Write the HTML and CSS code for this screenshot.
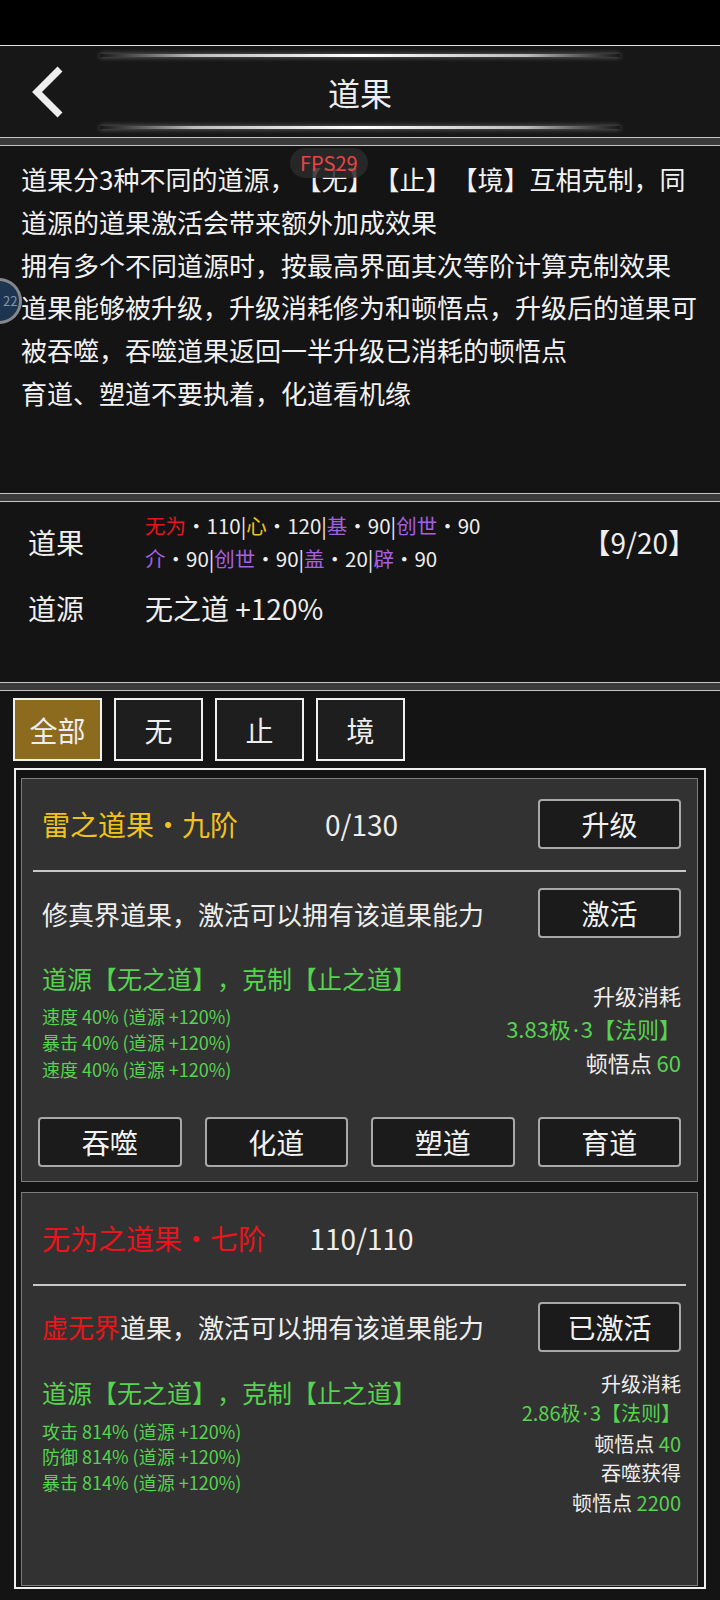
FILE: index.html
```html
<!DOCTYPE html>
<html lang="zh-CN">
<head>
  <meta charset="UTF-8">
  <meta name="viewport" content="width=device-width, initial-scale=1">
  <title>道果</title>
  <link rel="stylesheet" href="styles.css">
</head>
<body>
  <div class="status"></div>

  <header class="topbar">
    <div class="glow"></div>
    <div class="bar">
      <div class="back">
        <svg width="36" height="52" viewBox="0 0 36 52" fill="none" stroke="#eeeeee" stroke-width="7">
          <polyline points="31,3 8,26 31,49"/>
        </svg>
      </div>
      <h1 class="title">道果</h1>
      <div></div>
    </div>
    <div class="glow"></div>
  </header>

  <div class="stripe"></div>

  <section class="desc">
    道果分3种不同的道源，【无】【止】【境】互相克制，同<br>
    道源的道果激活会带来额外加成效果<br>
    拥有多个不同道源时，按最高界面其次等阶计算克制效果<br>
    道果能够被升级，升级消耗修为和顿悟点，升级后的道果可<br>
    被吞噬，吞噬道果返回一半升级已消耗的顿悟点<br>
    育道、塑道不要执着，化道看机缘
  </section>

  <div class="stripe"></div>

  <section class="stats">
    <div class="label">道果</div>
    <div class="tags">
      <span class="red">无为</span>·110|<span class="gold">心</span>·120|<span class="violet">基</span>·90|<span class="violet">创世</span>·90<br>
      <span class="violet">介</span>·90|<span class="violet">创世</span>·90|<span class="violet">盖</span>·20|<span class="violet">辟</span>·90
    </div>
    <div class="total">【9/20】</div>
    <div class="label">道源</div>
    <div class="source">无之道 +120%</div>
  </section>

  <div class="stripe"></div>

  <nav class="tabs">
    <div class="tab active">全部</div>
    <div class="tab">无</div>
    <div class="tab">止</div>
    <div class="tab">境</div>
  </nav>

  <main class="list">
    <div class="card">
      <div class="card-head">
        <span class="name gold">雷之道果·九阶</span>
        <span class="progress">0/130</span>
        <button class="btn">升级</button>
      </div>
      <div class="sep"></div>
      <div class="card-row">
        <span>修真界道果，激活可以拥有该道果能力</span>
        <button class="btn">激活</button>
      </div>
      <div class="card-body">
        <div class="effect">
          <div class="lead">道源【无之道】，克制【止之道】</div>
          <ul>
            <li>速度 40% (道源 +120%)</li>
            <li>暴击 40% (道源 +120%)</li>
            <li>速度 40% (道源 +120%)</li>
          </ul>
        </div>
        <div class="cost">
          <div>升级消耗</div>
          <div class="green">3.83极<span class="dot">·</span>3【法则】</div>
          <div>顿悟点 <span class="green">60</span></div>
        </div>
      </div>
      <div class="actions">
        <button class="btn">吞噬</button>
        <button class="btn">化道</button>
        <button class="btn">塑道</button>
        <button class="btn">育道</button>
      </div>
    </div>

    <div class="card final">
      <div class="card-head">
        <span class="name red">无为之道果·七阶</span>
        <span class="progress">110/110</span>
        <span></span>
      </div>
      <div class="sep"></div>
      <div class="card-row">
        <span><span class="red">虚无界</span>道果，激活可以拥有该道果能力</span>
        <button class="btn">已激活</button>
      </div>
      <div class="card-body">
        <div class="effect">
          <div class="lead">道源【无之道】，克制【止之道】</div>
          <ul>
            <li>攻击 814% (道源 +120%)</li>
            <li>防御 814% (道源 +120%)</li>
            <li>暴击 814% (道源 +120%)</li>
          </ul>
        </div>
        <div class="cost">
          <div>升级消耗</div>
          <div class="green">2.86极<span class="dot">·</span>3【法则】</div>
          <div>顿悟点 <span class="green">40</span></div>
          <div>吞噬获得</div>
          <div>顿悟点 <span class="green">2200</span></div>
        </div>
      </div>
    </div>
  </main>

  <!-- debug overlays from the device -->
  <div class="fps">FPS29</div>
  <div class="bubble">22</div>
</body>
</html>
```

FILE: styles.css
```css
* {
  margin: 0;
  padding: 0;
  box-sizing: border-box;
}
body {
  position: relative;
  width: 720px;
  min-height: 1600px;
  overflow-x: hidden;
  background: #141414;
  color: #eeeeee;
  font-family: "Noto Sans CJK SC", "Noto Sans", sans-serif;
  text-spacing-trim: space-all;
}
.red { color: #e8151b; }
.gold { color: #f0c21e; }
.violet { color: #a65fe3; }
.green { color: #56d34f; }
.dot {
  font-family: "Noto Sans", sans-serif;
  margin: 0 2px;
}

.status {
  height: 45px;
  background: #000;
}

/* header */
.topbar {
  background: #171717;
  border-top: 1px solid #dddddd;
  padding: 8px 0;
}
.glow {
  height: 3px;
  margin: 0 100px;
  background: linear-gradient(90deg, rgba(255,255,255,0), #bbbbbb 18%, #ffffff 50%, #bbbbbb 82%, rgba(255,255,255,0));
  box-shadow: 0 0 5px rgba(255, 255, 255, 0.45);
}
.bar {
  height: 69px;
  display: grid;
  grid-template-columns: 1fr auto 1fr;
  align-items: center;
}
.back {
  display: flex;
  padding-left: 29px;
}
.title {
  font-size: 32px;
  font-weight: 400;
}

.stripe {
  height: 9px;
  background: #3b3b3b;
  border-top: 1px solid #c4c4c4;
  border-bottom: 1px solid #c4c4c4;
}

/* intro text */
.desc {
  height: 347px;
  padding: 12px 0 0 21px;
  font-size: 26px;
  line-height: 42.8px;
  white-space: nowrap;
  color: #f2f2f2;
}

/* summary */
.stats {
  height: 180px;
  padding: 7px 24px 0 28px;
  display: grid;
  grid-template-columns: 117px 1fr auto;
  grid-template-rows: 66px 40px;
  row-gap: 13px;
  align-items: center;
}
.label {
  font-size: 28px;
}
.tags {
  font-size: 20.5px;
  line-height: 33px;
  white-space: nowrap;
}
.total {
  font-size: 28px;
}
.source {
  grid-column: 2 / 4;
  font-size: 28px;
}

/* filter tabs */
.tabs {
  display: flex;
  gap: 12px;
  padding: 7px 13px;
}
.tab {
  width: 89px;
  height: 63px;
  border: 2px solid #f0f0f0;
  background: #1e1e1e;
  font-size: 28px;
  display: flex;
  align-items: center;
  justify-content: center;
}
.tab.active {
  background: #8c6b1f;
}

/* cards */
.list {
  margin: 0 14px;
  border: 2px solid #f0f0f0;
  padding: 8px 6px 1px 5px;
}
.card {
  background: #323232;
  border: 1px solid #7c7c7c;
  padding: 20px 11px 14px;
}
.card + .card {
  margin-top: 10px;
}
.card.final {
  padding-bottom: 68px;
}
.card-head {
  min-height: 50px;
  padding: 0 5px 0 9px;
  display: grid;
  grid-template-columns: 1fr auto 1fr;
  align-items: center;
}
.card-head .btn {
  justify-self: end;
}
.name,
.progress {
  font-size: 28px;
}
.sep {
  height: 2px;
  margin-top: 21px;
  background: #c8c8c8;
}
.card-row {
  margin-top: 16px;
  padding: 0 5px 0 9px;
  display: flex;
  justify-content: space-between;
  align-items: center;
  font-size: 26px;
}
.btn {
  width: 143px;
  height: 50px;
  background: #1b1b1b;
  border: 2px solid #a8a8a8;
  border-radius: 4px;
  color: #f2f2f2;
  font-family: inherit;
  font-size: 28px;
  display: flex;
  align-items: center;
  justify-content: center;
}
.card-body {
  margin-top: 22px;
  padding: 0 5px 0 9px;
  display: flex;
  justify-content: space-between;
  align-items: flex-start;
}
.lead {
  color: #56d34f;
  font-size: 25px;
  line-height: 36px;
}
.effect ul {
  list-style: none;
  margin-top: 7px;
  color: #56d34f;
  font-size: 18px;
  line-height: 26.3px;
}
.cost {
  margin-top: 19px;
  text-align: right;
  font-size: 22px;
  line-height: 33px;
}
.final .effect ul {
  margin-top: 9px;
  line-height: 25.5px;
}
.final .cost {
  margin-top: -5px;
  font-size: 20px;
  line-height: 29.5px;
}
.actions {
  margin-top: 35px;
  padding: 0 5px;
  display: grid;
  grid-template-columns: repeat(4, 1fr);
  gap: 23px;
}
.actions .btn {
  width: auto;
}

/* overlays */
.fps {
  position: absolute;
  left: 290px;
  top: 148px;
  padding: 2px 10px;
  border-radius: 15px;
  background: rgba(42, 42, 42, 0.85);
  color: #e84545;
  font-size: 20px;
  line-height: 26px;
}
.bubble {
  position: absolute;
  left: -24px;
  top: 278px;
  width: 46px;
  height: 46px;
  border-radius: 50%;
  background: #1d3550;
  border: 3px solid rgba(150, 150, 150, 0.85);
  color: #8796a8;
  font-size: 13px;
  line-height: 40px;
  padding-left: 24px;
}
```
